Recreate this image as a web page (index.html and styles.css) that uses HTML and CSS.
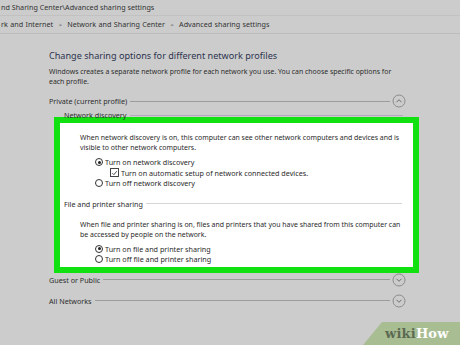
FILE: index.html
```html
<!DOCTYPE html>
<html>
<head>
<meta charset="utf-8">
<link rel="stylesheet" href="styles.css">
</head>
<body>
<div class="titlebar">nd Sharing Center\Advanced sharing settings</div>
<div class="breadcrumb">rk and Internet <span class="sep">&gt;</span> Network and Sharing Center <span class="sep">&gt;</span> Advanced sharing settings</div>
<div class="content">
  <h1 class="heading">Change sharing options for different network profiles</h1>
  <p class="desc">Windows creates a separate network profile for each network you use. You can choose specific options for each profile.</p>
  <div class="profile-row">
    <span class="label">Private (current profile)</span>
    <span class="rule"></span>
    <svg class="chev" viewBox="0 0 14 14" width="14" height="14"><circle cx="7" cy="7" r="6" fill="none" stroke="#8c8c8c" stroke-width="1"/><path d="M4.5 8.2 L7 5.7 L9.5 8.2" fill="none" stroke="#6e6e6e" stroke-width="1"/></svg>
  </div>
  <div class="sub-row">
    <span class="label">Network discovery</span>
    <span class="rule tinted"></span>
  </div>
  <div class="highlight">
    <p class="inner-desc">When network discovery is on, this computer can see other network computers and devices and is visible to other network computers.</p>
    <div class="options">
      <div class="opt"><span class="radio on"></span>Turn on network discovery</div>
      <div class="opt nested"><span class="check"><svg viewBox="0 0 8 8" width="8" height="8"><path d="M1.6 4.2 L3.3 5.9 L6.5 2" fill="none" stroke="#333" stroke-width="1"/></svg></span>Turn on automatic setup of network connected devices.</div>
      <div class="opt"><span class="radio"></span>Turn off network discovery</div>
    </div>
    <div class="sub-row inside">
      <span class="label">File and printer sharing</span>
      <span class="rule light"></span>
    </div>
    <p class="inner-desc second">When file and printer sharing is on, files and printers that you have shared from this computer can be accessed by people on the network.</p>
    <div class="options last">
      <div class="opt"><span class="radio on"></span>Turn on file and printer sharing</div>
      <div class="opt"><span class="radio"></span>Turn off file and printer sharing</div>
    </div>
  </div>
  <div class="profile-row guest">
    <span class="label">Guest or Public</span>
    <span class="rule"></span>
    <svg class="chev" viewBox="0 0 14 14" width="14" height="14"><circle cx="7" cy="7" r="6" fill="none" stroke="#8c8c8c" stroke-width="1"/><path d="M4.5 5.8 L7 8.3 L9.5 5.8" fill="none" stroke="#6e6e6e" stroke-width="1"/></svg>
  </div>
  <div class="profile-row all">
    <span class="label">All Networks</span>
    <span class="rule"></span>
    <svg class="chev" viewBox="0 0 14 14" width="14" height="14"><circle cx="7" cy="7" r="6" fill="none" stroke="#8c8c8c" stroke-width="1"/><path d="M4.5 5.8 L7 8.3 L9.5 5.8" fill="none" stroke="#6e6e6e" stroke-width="1"/></svg>
  </div>
</div>
<div class="wikihow"><span class="wiki">wiki</span><span class="how">How</span></div>
</body>
</html>
```
FILE: styles.css
```css
html, body {
  margin: 0;
  padding: 0;
}
body {
  width: 460px;
  height: 345px;
  overflow: hidden;
  position: relative;
  background: #cccccc;
  font-family: "Noto Sans", "Open Sans", sans-serif;
  color: #2c2c2c;
  font-size: 7px;
}
.titlebar {
  height: 15px;
  line-height: 14px;
  padding-left: 1px;
  border-bottom: 1px solid #c1c1c1;
  font-size: 7.2px;
  color: #333;
}
.breadcrumb {
  height: 17px;
  line-height: 17px;
  padding-left: 1px;
  border-bottom: 1px solid #bcbcbc;
  font-size: 7.2px;
  color: #333;
  word-spacing: 0.5px;
}
.breadcrumb .sep {
  font-size: 6px;
  margin: 0 3px;
}
.content {
  padding-left: 49px;
  width: 357px;
}
.heading {
  margin: 0;
  padding-top: 15px;
  font-size: 9.1px;
  font-weight: normal;
  color: #2d3450;
  line-height: 14px;
}
.desc {
  margin: 4px 0 0;
  font-size: 6.9px;
  line-height: 9.5px;
  width: 350px;
}
.profile-row {
  display: flex;
  align-items: center;
  margin-top: 8px;
  height: 14px;
}
.label {
  white-space: nowrap;
  font-size: 7.2px;
}
.rule {
  flex: 1;
  height: 0;
  border-top: 1px solid #9c9c9c;
  margin-left: 3px;
}
.rule.tinted {
  border-top-color: #b5a7bd;
}
.rule.light {
  border-top-color: #d6d6d6;
}
.chev {
  margin-left: 2px;
  flex: none;
}
.sub-row {
  display: flex;
  align-items: center;
  margin-left: 15px;
  width: 339px;
  height: 10px;
  margin-top: 2px;
}
.highlight {
  margin-left: 5px;
  width: 353px;
  border: 6px solid #11e011;
  background: #ffffff;
  padding: 7px 0 2px;
  margin-top: -3px;
}
.inner-desc {
  margin: 3px 0 0 20px;
  width: 330px;
  font-size: 6.95px;
  line-height: 10px;
  color: #2a2a2a;
}
.inner-desc.second {
  margin-top: 11px;
}
.options {
  margin: 4px 0 0 35px;
  display: flex;
  flex-direction: column;
}
.options.last {
  margin-top: 4px;
}
.opt {
  display: flex;
  align-items: center;
  height: 10.5px;
  font-size: 7.2px;
  color: #2a2a2a;
}
.opt.nested {
  margin-left: 15px;
}
.radio {
  width: 6px;
  height: 6px;
  border: 1px solid #333;
  border-radius: 50%;
  margin-right: 2px;
  position: relative;
  flex: none;
  background: #fff;
}
.radio.on::after {
  content: "";
  position: absolute;
  left: 1.5px;
  top: 1.5px;
  width: 3px;
  height: 3px;
  border-radius: 50%;
  background: #222;
}
.check {
  width: 7px;
  height: 7px;
  border: 1px solid #444;
  margin-right: 2px;
  display: flex;
  align-items: center;
  justify-content: center;
  flex: none;
}
.check svg {
  display: block;
}
.sub-row.inside {
  margin-left: 4px;
  width: 338px;
  margin-top: 10px;
  height: 10px;
}
.profile-row.guest {
  margin-top: 0;
}
.profile-row.all {
  margin-top: 7px;
}
.wikihow {
  position: absolute;
  right: 0;
  bottom: 0;
  width: 97px;
  height: 23px;
  background: #a9bd92;
  clip-path: polygon(19px 0, 100% 0, 100% 100%, 0 100%);
  font-family: "DejaVu Serif", serif;
  font-weight: bold;
  font-size: 13px;
  line-height: 23px;
  padding-left: 22px;
  box-sizing: border-box;
  letter-spacing: 0.2px;
}
.wiki {
  color: #5b6a52;
}
.how {
  color: #ffffff;
}
```
